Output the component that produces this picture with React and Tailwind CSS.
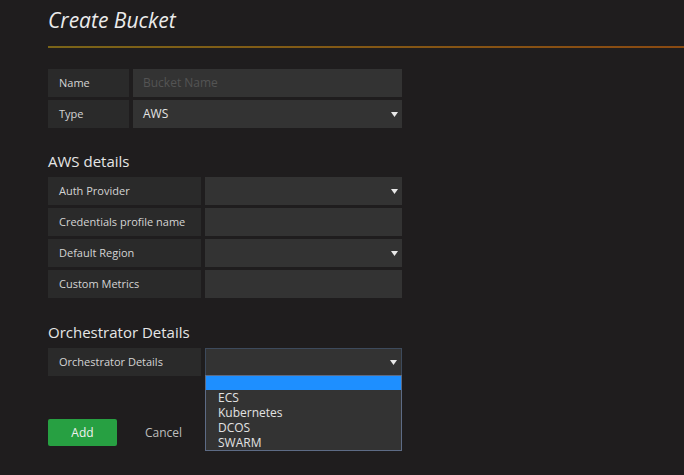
import React from 'react';

const Caret = () => (
  <svg width="7" height="5" viewBox="0 0 7 5" className="shrink-0">
    <polygon points="0,0 7,0 3.5,5" fill="#e8e8e8" />
  </svg>
);

const Row = ({ label, labelW, children, focused }) => (
  <div className="flex h-[28px] gap-[4px]">
    <div
      className="flex items-center bg-[#2a2a2a] pl-[11px] text-[11px] text-[#d4d4d4]"
      style={{ width: labelW }}
    >
      {label}
    </div>
    <div
      className={`relative flex flex-1 items-center bg-[#333333] ${
        focused ? 'border border-[#3d4a5c]' : ''
      }`}
    >
      {children}
    </div>
  </div>
);

const SelectBox = ({ value }) => (
  <div className="flex h-full w-full items-center justify-between pl-[10px] pr-[4px] text-[12px] text-[#e4e4e4]">
    <span>{value}</span>
    <Caret />
  </div>
);

export default function App() {
  const options = ['ECS', 'Kubernetes', 'DCOS', 'SWARM'];

  return (
    <div
      className="h-[475px] w-[684px] overflow-hidden bg-[#1f1d1e] pl-[48px]"
      style={{ fontFamily: '"Open Sans", "DejaVu Sans", sans-serif' }}
    >
      {/* Header */}
      <div className="pt-[4px]">
        <h1 className="text-[21px] font-normal italic leading-[32px] text-[#ececec]">Create Bucket</h1>
        <div className="mt-[10px] h-[2px] bg-gradient-to-r from-[#7a6418] to-[#8a4a12]" />
      </div>

      <div className="w-[354px]">
        {/* Basic */}
        <div className="mt-[21px] flex flex-col gap-[3px]">
          <Row label="Name" labelW={81}>
            <span className="pl-[10px] text-[12px] text-[#545454]">Bucket Name</span>
          </Row>
          <Row label="Type" labelW={81}>
            <SelectBox value="AWS" />
          </Row>
        </div>

        {/* AWS details */}
        <h2 className="mt-[23px] text-[15px] leading-[20px] text-[#e6e6e6]">AWS details</h2>
        <div className="mt-[6px] flex flex-col gap-[3px]">
          <Row label="Auth Provider" labelW={153}>
            <SelectBox value="" />
          </Row>
          <Row label="Credentials profile name" labelW={153} />
          <Row label="Default Region" labelW={153}>
            <SelectBox value="" />
          </Row>
          <Row label="Custom Metrics" labelW={153} />
        </div>

        {/* Orchestrator */}
        <h2 className="mt-[24px] text-[15px] leading-[20px] text-[#e6e6e6]">Orchestrator Details</h2>
        <div className="mt-[6px]">
          <Row label="Orchestrator Details" labelW={153} focused>
            <SelectBox value="" />
            <div className="absolute left-[-1px] right-[-1px] top-[26px] z-10 border border-[#5d6b85] bg-[#333333]">
              <div className="h-[14px] bg-[#1e8fff]" />
              {options.map((o) => (
                <div key={o} className="h-[15px] pl-[12px] text-[12px] leading-[15px] text-[#e2e2e2]">
                  {o}
                </div>
              ))}
            </div>
          </Row>
        </div>

        {/* Actions */}
        <div className="mt-[43px] flex items-center">
          <button className="h-[27px] w-[69px] rounded-[2px] bg-[#27a042] text-[12px] text-[#f0f0f0]">Add</button>
          <button className="ml-[28px] text-[12px] text-[#bdbdbd]">Cancel</button>
        </div>
      </div>
    </div>
  );
}
